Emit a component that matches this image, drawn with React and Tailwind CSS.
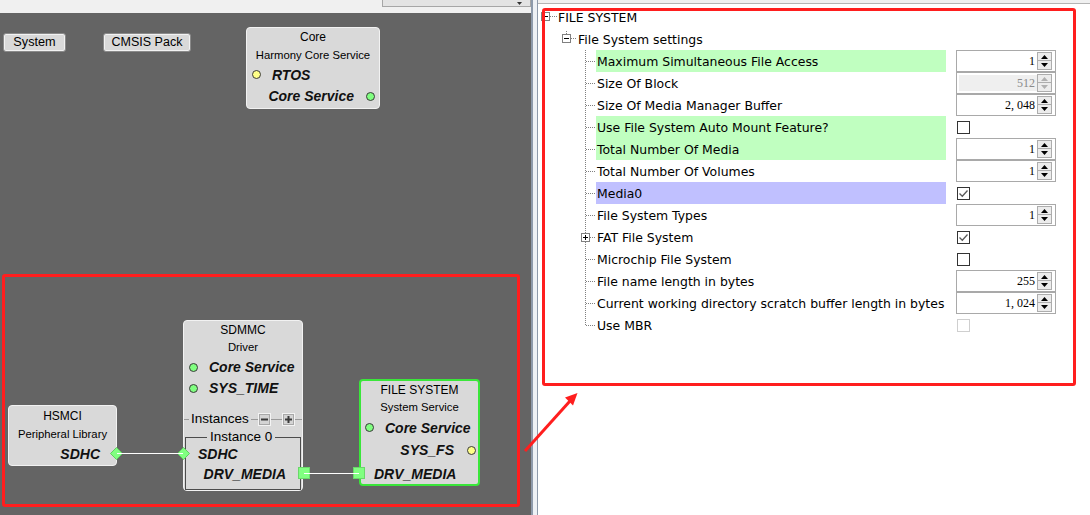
import React from "react";

const port = "font-['Liberation_Sans',Arial,sans-serif] font-bold italic text-[14px] leading-none text-[#111] whitespace-nowrap";
const ttl = "font-['Liberation_Sans',Arial,sans-serif] text-[12px] leading-none text-black whitespace-nowrap";
const sub = "font-['Liberation_Sans',Arial,sans-serif] text-[11.3px] leading-none text-black whitespace-nowrap";
const lbl = "font-['DejaVu_Sans',sans-serif] text-[12.45px] leading-none text-black whitespace-nowrap";

function GreenDot() {
  return <span className="block w-[9px] h-[9px] rounded-full bg-[#80ff80] border border-[#3a3a3a] shrink-0" />;
}
function YellowDot() {
  return <span className="block w-[9px] h-[9px] rounded-full bg-[#ffff88] border border-[#3a3a3a] shrink-0" />;
}
function Diamond({ className }) {
  return (
    <svg className={className} width="13" height="13" viewBox="0 0 13 13">
      <polygon points="6.5,0.5 12.5,6.5 6.5,12.5 0.5,6.5" fill="#80ff80" stroke="#5fcf5f" strokeWidth="1" />
    </svg>
  );
}
function Sq({ className }) {
  return <div className={`w-[12px] h-[12px] bg-[#80ff80] border border-[#6ad86a] ${className}`} />;
}

function Node({ className, children }) {
  return (
    <div className={`absolute rounded-[4px] bg-[#d9d9d9] border border-[#f2f2f2] flex flex-col ${className}`}>
      {children}
    </div>
  );
}

function SmallBtn({ plus }) {
  return (
    <div className="w-[13px] h-[13px] bg-[#d4d4d4] border border-[#f4f4f4] shadow-[0_0_0_1px_#a8a8a8_inset] flex items-center justify-center shrink-0">
      <svg width="9" height="9" viewBox="0 0 9 9">
        <rect x="1" y="3.5" width="7" height="2" fill="#3a3a3a" />
        {plus && <rect x="3.5" y="1" width="2" height="7" fill="#3a3a3a" />}
      </svg>
    </div>
  );
}

function Canvas() {
  return (
    <div className="relative flex-1 bg-[#646464] overflow-hidden">
      <div className="absolute left-[3px] top-[20px] w-[63px] h-[19px] rounded-[3px] bg-[#d9d9d9] border border-[#8a8a8a] shadow-[inset_0_0_0_1px_#f2f2f2] flex items-center justify-center">
        <span className="font-['Liberation_Sans',Arial,sans-serif] text-[12.7px] leading-none text-black">System</span>
      </div>
      <div className="absolute left-[103px] top-[20px] w-[88px] h-[19px] rounded-[3px] bg-[#d9d9d9] border border-[#8a8a8a] shadow-[inset_0_0_0_1px_#f2f2f2] flex items-center justify-center">
        <span className="font-['Liberation_Sans',Arial,sans-serif] text-[12.5px] leading-none text-black">CMSIS Pack</span>
      </div>

      <Node className="left-[246px] top-[14px] w-[134px] h-[82px]">
        <div className="h-[18px] flex items-center justify-center"><span className={ttl}>Core</span></div>
        <div className="h-[19px] flex items-center justify-center"><span className={sub}>Harmony Core Service</span></div>
        <div className="h-[19px] flex items-center pl-[5px] gap-[11px]"><YellowDot /><span className={port}>RTOS</span></div>
        <div className="h-[24px] flex items-center justify-end pr-[4px] gap-[12px]"><span className={port}>Core Service</span><GreenDot /></div>
      </Node>

      <Node className="left-[8px] top-[392px] w-[109px] h-[61px]">
        <div className="h-[19px] flex items-center justify-center"><span className={ttl}>HSMCI</span></div>
        <div className="h-[19px] flex items-center justify-center"><span className={sub}>Peripheral Library</span></div>
        <div className="h-[19px] flex items-center justify-end pr-[16px]"><span className={port}>SDHC</span></div>
        <Diamond className="absolute -right-[7px] top-[41px]" />
      </Node>

      <Node className="left-[183px] top-[307px] w-[120px] h-[171px]">
        <div className="h-[18px] flex items-center justify-center"><span className={ttl}>SDMMC</span></div>
        <div className="h-[18px] flex items-center justify-center"><span className={sub}>Driver</span></div>
        <div className="h-[20px] flex items-center pl-[5px] gap-[11px]"><GreenDot /><span className={port}>Core Service</span></div>
        <div className="h-[22px] flex items-center pl-[5px] gap-[11px]"><GreenDot /><span className={port}>SYS_TIME</span></div>
        <div className="h-[10px]" />
        <div className="h-[20px] flex items-center">
          <div className="w-[5px] h-px bg-[#9a9a9a]" />
          <span className="px-[2px] font-['Liberation_Sans',Arial,sans-serif] text-[13.5px] leading-none text-black">Instances</span>
          <div className="w-[7px] h-px bg-[#9a9a9a]" />
          <SmallBtn />
          <div className="w-[11px] h-px bg-[#9a9a9a]" />
          <SmallBtn plus />
          <div className="flex-1 h-px bg-[#9a9a9a]" />
        </div>
        <div className="mx-[1px] flex flex-col">
          <div className="h-[16px] flex items-center">
            <div className="w-[22px] h-[8px] self-end border-l border-t border-[#4c4c4c]" />
            <span className="px-[3px] font-['Liberation_Sans',Arial,sans-serif] text-[13.5px] leading-none text-black">Instance 0</span>
            <div className="flex-1 h-[8px] self-end border-r border-t border-[#4c4c4c]" />
          </div>
          <div className="border-l border-r border-b border-[#4c4c4c] flex flex-col pb-[4px]">
            <div className="h-[17px] flex items-center pl-[12px]"><span className={port}>SDHC</span></div>
            <div className="h-[23px] flex items-center justify-end pr-[14px]"><span className={port}>DRV_MEDIA</span></div>
          </div>
        </div>
        <Diamond className="absolute -left-[7px] top-[126px]" />
        <Sq className="absolute left-[114px] top-[146px]" />
      </Node>

      <Node className="left-[359px] top-[366px] w-[121px] h-[107px] !border-2 !border-[#3ae63a]">
        <div className="h-[17px] flex items-center justify-center"><span className={ttl}>FILE SYSTEM</span></div>
        <div className="h-[20px] flex items-center justify-center"><span className={sub}>System Service</span></div>
        <div className="h-[19px] flex items-center pl-[4px] gap-[11px]"><GreenDot /><span className={port}>Core Service</span></div>
        <div className="h-[26px] flex items-center justify-end pr-[2px] gap-[13px]"><span className={port}>SYS_FS</span><YellowDot /></div>
        <div className="h-[21px] flex items-center pl-[13px]"><span className={port}>DRV_MEDIA</span></div>
        <Sq className="absolute -left-[8px] top-[86px]" />
      </Node>

      <div className="absolute left-[117px] top-[440px] w-[66px] h-px bg-white" />
      <div className="absolute left-[304px] top-[460px] w-[55px] h-px bg-white" />

      <div className="absolute left-[2px] top-[261px] w-[518px] h-[233px] border-[3px] border-[#ff1e1e] rounded-[3px]" />
    </div>
  );
}

function TreeGutter({ kind, last }) {
  if (kind === 0) {
    return (
      <svg width="20" height="22" className="shrink-0" shapeRendering="crispEdges">
        <rect x="3.5" y="6.5" width="8" height="8" fill="white" stroke="#808080" />
        <line x1="5" y1="10.5" x2="10" y2="10.5" stroke="#000" />
        <line x1="12" y1="10.5" x2="19" y2="10.5" stroke="#808080" strokeDasharray="1 1" />
      </svg>
    );
  }
  if (kind === 1) {
    return (
      <svg width="40" height="22" className="shrink-0" shapeRendering="crispEdges">
        <line x1="28.5" y1="3" x2="28.5" y2="6" stroke="#808080" strokeDasharray="1 1" />
        <rect x="24.5" y="6.5" width="8" height="8" fill="white" stroke="#808080" />
        <line x1="26" y1="10.5" x2="31" y2="10.5" stroke="#000" />
        <line x1="33" y1="10.5" x2="39" y2="10.5" stroke="#808080" strokeDasharray="1 1" />
      </svg>
    );
  }
  return (
    <svg width="58" height="22" className="shrink-0" shapeRendering="crispEdges">
      <line x1="47.5" y1="0" x2="47.5" y2={last ? 11 : 22} stroke="#808080" strokeDasharray="1 1" />
      <line x1="48" y1="11.5" x2="58" y2="11.5" stroke="#808080" strokeDasharray="1 1" />
      {kind === 3 && (
        <>
          <rect x="43.5" y="7.5" width="8" height="8" fill="white" stroke="#808080" />
          <line x1="45" y1="11.5" x2="50" y2="11.5" stroke="#000" />
          <line x1="47.5" y1="9" x2="47.5" y2="14" stroke="#000" />
        </>
      )}
    </svg>
  );
}

function Arrows({ disabled }) {
  const c = disabled ? "#b0b0b0" : "#000";
  return (
    <div className="w-[15px] h-[18px] flex flex-col shrink-0 mr-[1px]">
      <div className="h-[9px] bg-[#ececec] border border-[#adadad] flex items-center justify-center">
        <svg width="7" height="4" viewBox="0 0 7 4"><polygon points="3.5,0 7,4 0,4" fill={c} /></svg>
      </div>
      <div className="h-[9px] bg-[#ececec] border border-[#adadad] border-t-0 flex items-center justify-center">
        <svg width="7" height="4" viewBox="0 0 7 4"><polygon points="0,0 7,0 3.5,4" fill={c} /></svg>
      </div>
    </div>
  );
}

function Spinner({ value, disabled }) {
  return (
    <div className="w-[100px] h-[22px] border border-[#a9a9a9] bg-white flex items-center p-[2px]">
      <div className={`flex-1 h-full flex items-center justify-end pr-[2px] font-['Liberation_Serif',serif] text-[12px] leading-none whitespace-pre ${disabled ? "bg-[#efefef] text-[#8a8a8a]" : "bg-white text-black"}`}>
        {value}
      </div>
      <Arrows disabled={disabled} />
    </div>
  );
}

function Check({ checked, disabled }) {
  return (
    <div className={`ml-[1px] w-[13px] h-[13px] bg-white border ${disabled ? "border-[#cfcfcf]" : "border-[#333]"} flex items-center justify-center`}>
      {checked && (
        <svg width="11" height="11" viewBox="0 0 11 11">
          <polyline points="1.5,5.5 4.3,8.3 9.5,2.5" fill="none" stroke="#5a5a5a" strokeWidth="1.3" />
        </svg>
      )}
    </div>
  );
}

const rows = [
  { t: "Maximum Simultaneous File Access", hl: "bg-[#c0ffc0]", ed: <Spinner value="1" /> },
  { t: "Size Of Block", ed: <Spinner value="512" disabled /> },
  { t: "Size Of Media Manager Buffer", ed: <Spinner value="2, 048" /> },
  { t: "Use File System Auto Mount Feature?", hl: "bg-[#c0ffc0]", ed: <Check /> },
  { t: "Total Number Of Media", hl: "bg-[#c0ffc0]", ed: <Spinner value="1" /> },
  { t: "Total Number Of Volumes", ed: <Spinner value="1" /> },
  { t: "Media0", hl: "bg-[#c0c0ff]", ed: <Check checked /> },
  { t: "File System Types", ed: <Spinner value="1" /> },
  { t: "FAT File System", plus: true, ed: <Check checked /> },
  { t: "Microchip File System", ed: <Check /> },
  { t: "File name length in bytes", ed: <Spinner value="255" /> },
  { t: "Current working directory scratch buffer length in bytes", ed: <Spinner value="1, 024" /> },
  { t: "Use MBR", last: true, ed: <Check disabled /> },
];

function Tree() {
  return (
    <div className="pt-[2px] flex flex-col">
      <div className="h-[22px] flex items-center">
        <TreeGutter kind={0} />
        <span className={`${lbl} mt-[2px]`}>FILE SYSTEM</span>
      </div>
      <div className="h-[22px] flex items-center">
        <TreeGutter kind={1} />
        <span className={`${lbl} mt-[2px]`}>File System settings</span>
      </div>
      {rows.map((r, i) => (
        <div key={i} className="h-[22px] flex items-stretch">
          <TreeGutter kind={r.plus ? 3 : 2} last={r.last} />
          <div className={`w-[350px] flex items-center pl-[1px] pt-[2px] ${r.hl || ""}`}>
            <span className={lbl}>{r.t}</span>
          </div>
          <div className="ml-[10px] w-[100px] flex items-center">{r.ed}</div>
        </div>
      ))}
    </div>
  );
}

export default function App() {
  return (
    <div className="relative w-[1090px] h-[515px] flex overflow-hidden bg-white">
      <div className="w-[531px] flex flex-col">
        <div className="h-[13px] bg-[#f0f0f0] flex items-start overflow-hidden">
          <div className="ml-[382px] w-[149px] h-[7px] bg-[#e3e3e3] border border-t-0 border-[#a6a6a6] flex items-end justify-end pr-[8px] overflow-hidden">
            <svg width="5" height="3" viewBox="0 0 5 3" className="mb-[1px]"><polygon points="0,0 5,0 2.5,3" fill="#333" /></svg>
          </div>
        </div>
        <Canvas />
      </div>
      <div className="w-[7px] bg-[#eef1f5] border-l-2 border-r border-[#8e9aab]" />
      <div className="relative flex-1 flex flex-col bg-white">
        <div className="h-[4px] bg-[#f0f0f0] border-b border-[#b4b4b4]" />
        <Tree />
        <div className="absolute left-[4px] top-[8px] w-[534px] h-[378px] border-[3px] border-[#ff1e1e] rounded-[3px]" />
      </div>
      <svg className="absolute left-[520px] top-[388px]" width="64" height="68" viewBox="0 0 64 68">
        <line x1="5" y1="63" x2="50" y2="13" stroke="#ff1e1e" strokeWidth="3" />
        <polygon points="57.5,5 45,9.5 53,17.5" fill="#ff1e1e" />
      </svg>
    </div>
  );
}
